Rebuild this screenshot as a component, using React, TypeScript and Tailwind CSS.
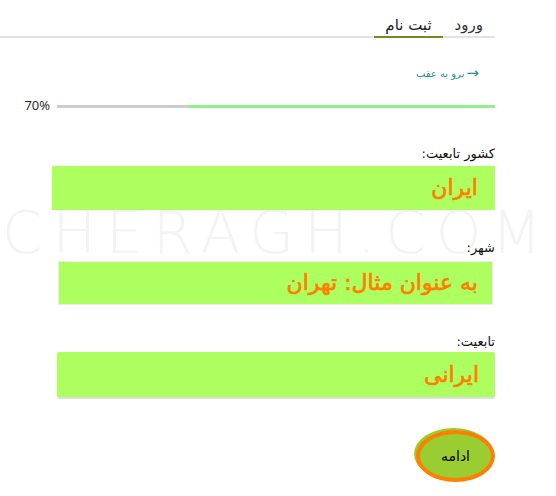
import { useState } from "react"

const fieldText = "text-[#ff7f00] text-[22px] font-normal leading-none [-webkit-text-stroke:0.7px_#ff7f00]"

export default function App() {
  const [tab, setTab] = useState("signup")

  return (
    <div
      dir="rtl"
      className="relative w-[556px] h-[496px] bg-white overflow-hidden text-black"
      style={{ fontFamily: '"DejaVu Sans", "Noto Sans", sans-serif' }}
    >
      {/* watermark */}
      <div
        dir="ltr"
        className="absolute left-[2px] top-[204px] pointer-events-none select-none text-[58px] font-extralight tracking-[10px] text-[#f3f3f3] leading-none whitespace-nowrap"
      >
        CHERAGH.COM
      </div>

      <div className="relative mr-[61px] pt-[13px]">
        {/* tabs */}
        <div className="flex border-b-2 border-[#e2e2e2] h-[25px]">
          <button
            onClick={() => setTab("login")}
            className={`px-[12px] h-[25px] text-[15px] leading-[24px] text-[#333] -mb-[2px] border-b-2 ${
              tab === "login" ? "border-[#6b8e23]" : "border-transparent"
            }`}
          >
            ورود
          </button>
          <button
            onClick={() => setTab("signup")}
            className={`px-[11px] h-[25px] text-[15px] leading-[24px] text-[#222] -mb-[2px] border-b-2 ${
              tab === "signup" ? "border-[#6b8e23]" : "border-transparent"
            }`}
          >
            ثبت نام
          </button>
        </div>

        {/* back link */}
        <div className="mt-[27px] flex items-center gap-[2px] pr-[16px] h-[16px] text-[10px] text-[#2f8f8a]">
          <span className="text-[15px] leading-none">→</span>
          <span>برو به عقب</span>
        </div>

        {/* progress */}
        <div className="mt-[17px] flex items-center h-[16px]">
          <div className="w-[438px] h-[3px] bg-[#cccccc] flex">
            <div className="h-full bg-[#90ee90]" style={{ width: "70%" }} />
          </div>
          <span dir="ltr" className="mr-[7px] text-[13px] text-[#222]" style={{ fontFamily: '"Open Sans", sans-serif' }}>
            70%
          </span>
        </div>

        {/* country */}
        <label className="block mt-[31px] text-[13px] leading-[18px] text-[#111]">کشور تابعیت:</label>
        <div className="mt-[3px] ml-[52px] h-[44px] bg-[#adff5f] flex items-center pr-[17px]">
          <span className={fieldText}>ایران</span>
        </div>

        {/* city */}
        <label className="block mt-[29px] text-[13px] leading-[18px] text-[#111]">شهر:</label>
        <div className="mt-[4px] ml-[58px] mr-[2px] h-[44px] bg-[#adff5f] border border-[#f0e8ec] flex items-center pr-[14px]">
          <span className={fieldText}>به عنوان مثال: تهران</span>
        </div>

        {/* nationality */}
        <label className="block mt-[28px] text-[13px] leading-[18px] text-[#111]">تابعیت:</label>
        <div className="mt-[1px] ml-[57px] h-[45px] bg-[#adff5f] rounded-[2px] shadow-[0_2px_1px_#dddddd] flex items-center pr-[16px]">
          <span className={fieldText}>ایرانی</span>
        </div>

        {/* submit */}
        <div className="mt-[33px] flex">
          <button className="w-[79px] h-[52px] rounded-[50%] bg-[#9acd32] border-[4px] border-[#ff7f00] shadow-[-2px_-2px_0_#9acd32] text-[14px] text-black">
            ادامه
          </button>
        </div>
      </div>
    </div>
  )
}
